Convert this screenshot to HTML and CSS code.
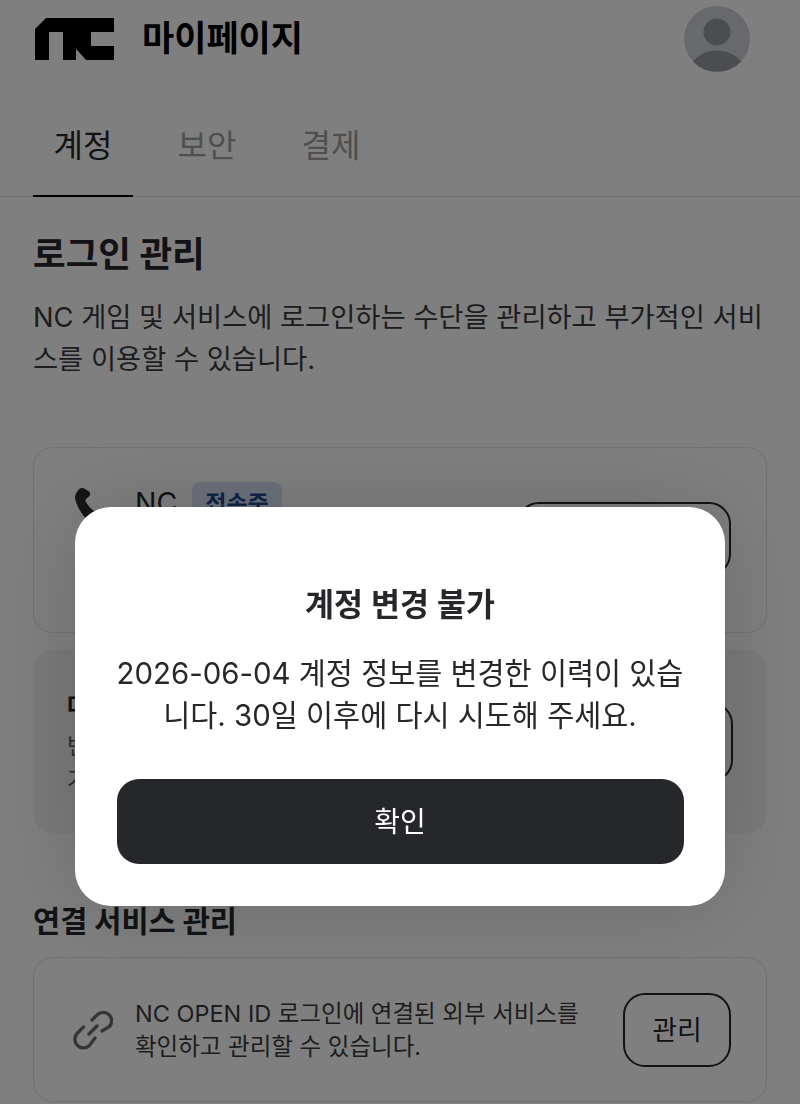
FILE: index.html
```html
<!DOCTYPE html>
<html lang="ko">
<head>
<meta charset="UTF-8" />
<title>마이페이지</title>
<link rel="stylesheet" href="styles.css">
</head>
<body>
<header class="top">
  <svg class="logo" viewBox="0 0 79 42" aria-hidden="true">
    <path d="M0 42V11L11 0H79V14H56V28H79V42H51L43 33L41 31V42H28V14H14V42Z" />
  </svg>
  <div class="top-title">마이페이지</div>
  <svg class="avatar" viewBox="0 0 66 66" aria-hidden="true">
    <circle cx="33" cy="33" r="33" fill="#d0d2d8" />
    <circle cx="33" cy="26" r="13.500" fill="#999ba1" />
    <path d="M9 55.500C14 49 23 44.500 33 44.500S52 49 57 55.500A33 33 0 0 1 9 55.500Z" fill="#999ba1" />
  </svg>
</header>

<nav class="tabs">
  <a class="tab tab-active">계정</a>
  <a class="tab">보안</a>
  <a class="tab">결제</a>
</nav>

<main class="content">
  <h2 class="title-big">로그인 관리</h2>
  <p class="desc">NC 게임 및 서비스에 로그인하는 수단을 관리하고 부가적인 서비스를 이용할 수 있습니다.</p>

  <section class="card card-login">
    <svg class="icon" viewBox="0 0 30 40" aria-hidden="true">
      <path d="M6 1.500C7.500 .5 9.500 1 11 2L15 4.500C16.500 5.500 16.500 7.500 15.500 9L11.500 12.500C11 14 13 17 16 20.500L24 28L14 34C8 28 2 18 1 11C.8 8 3 4 6 1.500Z" fill="#2a2a2c" />
    </svg>
    <div class="card-name">NC <span class="badge">접속중</span></div>
    <button class="btn btn-wide"></button>
  </section>

  <section class="card card-gray">
    <div class="card-text">
      <div class="card-head">대표</div>
      <div class="card-sub">변경<br>가능</div>
    </div>
    <button class="btn btn-mid"></button>
  </section>

  <h3 class="title-small">연결 서비스 관리</h3>
  <section class="card card-link">
    <svg class="icon icon-link" viewBox="0 0 40 40" aria-hidden="true">
      <path d="M19 10L24.500 4.500A8.500 8.500 0 0 1 36.500 16.500L29 21M10.500 17L4.500 23A8.500 8.500 0 0 0 16.500 35.500L22 28M16 24L24 16" fill="none" stroke="#6c6d72" stroke-width="3.400" stroke-linecap="round" />
    </svg>
    <p class="card-note">NC OPEN ID 로그인에 연결된 외부 서비스를 확인하고 관리할 수 있습니다.</p>
    <button class="btn">관리</button>
  </section>
</main>

<div class="overlay">
  <div class="modal">
    <h4 class="modal-title">계정 변경 불가</h4>
    <p class="modal-text">2026-06-04 계정 정보를 변경한 이력이 있습니다. 30일 이후에 다시 시도해 주세요.</p>
    <button class="modal-btn">확인</button>
  </div>
</div>
</body>
</html>
```

FILE: styles.css
```css
* {
  box-sizing: border-box;
}
html, body {
  height: 1104px;
  overflow: hidden;
}
body {
  margin: 0;
  background: #fff;
  color: #26272a;
  font-family: Inter, "Noto Sans CJK KR", sans-serif;
}
.top {
  display: flex;
  align-items: center;
  height: 76px;
  padding: 0 50px 0 35px;
}
.logo {
  width: 79px;
  height: 42px;
  margin-top: 2px;
  fill: #000;
}
.top-title {
  margin: 0 0 5px 28px;
  flex: 1;
  font-size: 35px;
  font-weight: 700;
  color: #000;
}
.avatar {
  width: 66px;
  height: 66px;
  margin-top: 2px;
}
.tabs {
  display: flex;
  height: 121px;
  padding: 0 33px;
  border-bottom: 1px solid #dcdcdc;
}
.tab {
  width: 100px;
  padding-top: 44px;
  margin-right: 24px;
  margin-bottom: -1px;
  text-align: center;
  font-size: 32px;
  color: #9e9fa2;
}
.tab-active {
  color: #26272a;
  border-bottom: 2px solid #000;
}
.content {
  padding: 0 33px;
}
.title-big {
  margin: 37px 0 0;
  font-size: 35.500px;
  line-height: 42px;
  font-weight: 700;
}
.desc {
  margin: 21px 0 0;
  font-size: 27.300px;
  line-height: 42px;
  color: #3a3b3e;
}
.card {
  display: flex;
  align-items: center;
  border: 1px solid #e4e4e6;
  border-radius: 20px;
}
.card-login {
  align-items: flex-start;
  height: 186px;
  margin-top: 66px;
  padding: 34px 35px 0 40px;
}
.card-gray {
  height: 183px;
  margin-top: 17px;
  padding: 0 33px;
  background: #f4f4f5;
  border-color: #f4f4f5;
}
.card-link {
  height: 145px;
  margin-top: 16px;
  padding: 0 35px 0 39px;
}
.icon {
  width: 30px;
  height: 40px;
  margin-top: 5px;
  flex: none;
}
.icon-link {
  width: 40px;
  margin-top: 0;
}
.card-name {
  display: flex;
  flex: 1;
  align-items: center;
  gap: 15px;
  margin-left: 31px;
  font-size: 28.500px;
}
.badge {
  padding: 3px 13px;
  border-radius: 8px;
  background: #d9e2f7;
  color: #24498f;
  font-size: 23px;
  font-weight: 700;
}
.card-text {
  flex: 1;
}
.card-head {
  font-size: 24px;
  font-weight: 700;
}
.card-sub {
  margin-top: 8px;
  font-size: 23px;
  line-height: 34px;
  color: #5a5b5e;
}
.card-note {
  flex: 1;
  margin: 0 0 0 22px;
  padding-right: 30px;
  font-size: 23.500px;
  line-height: 33px;
  color: #3a3b3e;
}
.btn {
  width: 108px;
  height: 74px;
  flex: none;
  padding: 0 0 3px;
  border: 2px solid #26272a;
  border-radius: 22px;
  background: #fff;
  color: #26272a;
  font: 400 27px Inter, "Noto Sans CJK KR", sans-serif;
}
.btn-wide {
  width: 214px;
  height: 74px;
  margin-top: 20px;
}
.btn-mid {
  width: 214px;
  height: 80px;
  background: transparent;
}
.title-small {
  margin: 68px 0 0;
  font-size: 29.500px;
  line-height: 40px;
  font-weight: 700;
}
.overlay {
  position: fixed;
  inset: 0;
  display: flex;
  justify-content: center;
  padding-top: 507px;
  background: rgba(0, 0, 0, 0.5);
}
.modal {
  width: 650px;
  height: 399px;
  padding: 77px 41.500px 0;
  border-radius: 36px;
  background: #fff;
  box-shadow: 0 0 90px rgba(0, 0, 0, 0.16);
  text-align: center;
}
.modal-title {
  margin: 0;
  font-size: 31.500px;
  line-height: 42px;
  font-weight: 600;
}
.modal-text {
  margin: 27px 0 0;
  font-size: 29.400px;
  line-height: 42px;
}
.modal-btn {
  width: 100%;
  height: 85px;
  margin-top: 42px;
  padding: 0 0 3px;
  border: none;
  border-radius: 22px;
  background: #26272a;
  color: #fff;
  font: 400 28px Inter, "Noto Sans CJK KR", sans-serif;
}
```
